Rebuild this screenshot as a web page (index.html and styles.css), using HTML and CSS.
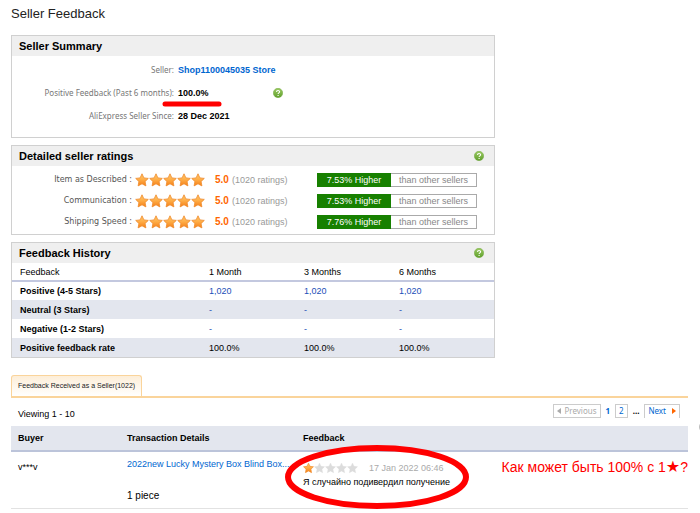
FILE: index.html
```html
<!DOCTYPE html>
<html lang="en">
<head>
<meta charset="utf-8">
<title>Seller Feedback</title>
<link rel="stylesheet" href="styles.css">
</head>
<body>
<svg class="defs" aria-hidden="true">
  <defs>
    <linearGradient id="gold" x1="0" y1="0" x2="0" y2="1"><stop offset="0" stop-color="#ffc766"/><stop offset=".45" stop-color="#ffb04a"/><stop offset="1" stop-color="#f57f17"/></linearGradient>
    <linearGradient id="green" x1="0" y1="0" x2="0" y2="1"><stop offset="0" stop-color="#9ccb62"/><stop offset="1" stop-color="#5f9f2c"/></linearGradient>
    <path id="star" d="M7 .8 8.9 4.9 13.3 5.4 10.1 8.5 10.9 12.9 7 10.8 3.1 12.9 3.9 8.5 .7 5.4 5.1 4.9Z"/>
    <symbol id="on" viewBox="0 0 14 14"><use href="#star" fill="url(#gold)" stroke="#ef8a2c" stroke-width=".8" stroke-linejoin="round"/></symbol>
    <symbol id="off" viewBox="0 0 14 14"><use href="#star" fill="#dcdcdc" stroke="#dcdcdc" stroke-width=".6" stroke-linejoin="round"/></symbol>
    <symbol id="help" viewBox="0 0 10 10"><circle cx="5" cy="5" r="4.7" fill="url(#green)" stroke="#6fa63d" stroke-width=".5"/><path d="M3.5 4C3.5 2.1 6.6 2.1 6.6 3.8 6.6 4.9 5.1 4.8 5.1 6M5.1 6.9V7.9" fill="none" stroke="#fff" stroke-width="1.1"/></symbol>
  </defs>
</svg>
<main class="page">
  <h1>Seller Feedback</h1>

  <section class="panel summary">
    <h2>Seller Summary</h2>
    <dl>
      <dt>Seller:</dt><dd><a href="#store">Shop1100045035 Store</a></dd>
      <dt>Positive Feedback (Past 6 months):</dt>
      <dd><span class="marked">100.0%<svg class="underline" viewBox="0 0 60 6" aria-hidden="true"><path d="M3 3H57" stroke="#f00" stroke-width="5" stroke-linecap="round"/></svg></span><svg class="help"><use href="#help"/></svg></dd>
      <dt>AliExpress Seller Since:</dt><dd>28 Dec 2021</dd>
    </dl>
  </section>

  <section class="panel ratings">
    <h2>Detailed seller ratings <svg class="help"><use href="#help"/></svg></h2>
    <ul>
      <li><span class="name">Item as Described :</span><span class="stars"><svg><use href="#on"/></svg><svg><use href="#on"/></svg><svg><use href="#on"/></svg><svg><use href="#on"/></svg><svg><use href="#on"/></svg></span><b>5.0</b><span class="count">(1020 ratings)</span><span class="compare"><strong>7.53% Higher</strong><span>than other sellers</span></span></li>
      <li><span class="name">Communication :</span><span class="stars"><svg><use href="#on"/></svg><svg><use href="#on"/></svg><svg><use href="#on"/></svg><svg><use href="#on"/></svg><svg><use href="#on"/></svg></span><b>5.0</b><span class="count">(1020 ratings)</span><span class="compare"><strong>7.53% Higher</strong><span>than other sellers</span></span></li>
      <li><span class="name">Shipping Speed :</span><span class="stars"><svg><use href="#on"/></svg><svg><use href="#on"/></svg><svg><use href="#on"/></svg><svg><use href="#on"/></svg><svg><use href="#on"/></svg></span><b>5.0</b><span class="count">(1020 ratings)</span><span class="compare"><strong>7.76% Higher</strong><span>than other sellers</span></span></li>
    </ul>
  </section>

  <section class="panel history">
    <h2>Feedback History <svg class="help"><use href="#help"/></svg></h2>
    <table>
      <thead><tr><th>Feedback</th><th>1 Month</th><th>3 Months</th><th>6 Months</th></tr></thead>
      <tbody>
        <tr><th>Positive (4-5 Stars)</th><td><a href="#p1">1,020</a></td><td><a href="#p3">1,020</a></td><td><a href="#p6">1,020</a></td></tr>
        <tr><th>Neutral (3 Stars)</th><td><a href="#n1">-</a></td><td><a href="#n3">-</a></td><td><a href="#n6">-</a></td></tr>
        <tr><th>Negative (1-2 Stars)</th><td><a href="#g1">-</a></td><td><a href="#g3">-</a></td><td><a href="#g6">-</a></td></tr>
        <tr><th>Positive feedback rate</th><td>100.0%</td><td>100.0%</td><td>100.0%</td></tr>
      </tbody>
    </table>
  </section>

  <section class="received">
    <nav class="tabs"><a href="#received">Feedback Received as a Seller(1022)</a></nav>
    <div class="toolbar">
      <span class="viewing">Viewing 1 - 10</span>
      <nav class="pager">
        <button class="prev" disabled><svg viewBox="0 0 4 6"><path d="M4 0V6L0 3Z"/></svg>Previous</button>
        <b>1</b>
        <a class="box" href="#2">2</a>
        <span>...</span>
        <a class="box next" href="#next">Next<svg viewBox="0 0 4 6"><path d="M0 0V6L4 3Z"/></svg></a>
      </nav>
    </div>
    <table class="reviews">
      <thead><tr><th>Buyer</th><th>Transaction Details</th><th>Feedback</th></tr></thead>
      <tbody><tr>
        <td class="buyer">v***v</td>
        <td><a class="item" href="#item">2022new Lucky Mystery Box Blind Box...</a><p class="qty">1 piece</p></td>
        <td>
          <div class="feedback">
            <div class="review">
              <div class="meta"><span class="stars small"><svg><use href="#on"/></svg><svg><use href="#off"/></svg><svg><use href="#off"/></svg><svg><use href="#off"/></svg><svg><use href="#off"/></svg></span><time>17 Jan 2022 06:46</time></div>
              <p lang="ru">Я случайно подивердил получение</p>
              <svg class="ring" viewBox="0 0 184 64" aria-hidden="true"><ellipse cx="92" cy="32" rx="89" ry="29" fill="none" stroke="#f00" stroke-width="6"/></svg>
            </div>
            <p class="note" lang="ru">Как может быть 100% с 1<span>★</span>?</p>
          </div>
        </td>
      </tr></tbody>
    </table>
  </section>
</main>
<div class="edge"></div>
</body>
</html>
```

FILE: styles.css
```css
* { box-sizing: border-box; }
body { margin: 0; position: relative; overflow-x: hidden; background: #fff; color: #000; font: 9px/12px "Liberation Sans", Arial, sans-serif; }
h1, h2, p, dl, dd, ul { margin: 0; padding: 0; }
a { color: #0066d0; text-decoration: none; }
svg { display: block; flex: none; }
.defs { position: absolute; width: 0; height: 0; }
.page { padding: 6px 12px 0 11px; }
h1 { font-size: 13px; line-height: 16px; font-weight: normal; margin-bottom: 13px; color: #222; }

.panel { max-width: 484px; border: 1px solid #d0d0d0; margin-bottom: 7px; }
.panel h2 { display: flex; justify-content: space-between; align-items: center; height: 20px; padding: 0 10px 0 7px; background: #efefef; font-size: 11px; }
.help { width: 10px; height: 10px; }

.summary dl { display: grid; grid-template-columns: 162px 1fr; column-gap: 4px; row-gap: 11px; padding: 8px 0 15px; }
.summary dt { text-align: right; color: #777; font-family: "Noto Sans", sans-serif; font-size: 8px; }
.summary dd { display: flex; align-items: center; font-weight: bold; }
.marked { position: relative; width: 95px; }
.underline { position: absolute; left: -16px; top: 14px; width: 60px; height: 6px; }

.ratings ul { display: grid; row-gap: 7px; padding: 7px 0 5px; list-style: none; }
.ratings li { display: flex; align-items: center; height: 14px; }
.ratings .name { width: 120px; margin-right: 3px; text-align: right; color: #555; font-family: "DejaVu Sans", sans-serif; font-size: 8px; }
.stars { display: flex; }
.stars svg { width: 14px; height: 14px; }
.ratings b { margin: 0 3px 0 10px; color: #f60; font-size: 10px; width: 14px; }
.count { color: #999; width: 85px; }
.compare { display: flex; width: 160px; height: 14px; text-align: center; }
.compare strong { width: 74px; background: #178000; color: #fff; line-height: 14px; font-weight: normal; }
.compare span { flex: 1; border: 1px solid #aaa; border-left: 0; color: #888; }

table { width: 100%; border-collapse: collapse; table-layout: fixed; }
th { text-align: left; }
th, td { padding: 0; }
.history th:first-child { width: 197px; padding-left: 8px; }
.history thead th { height: 18px; font-weight: normal; border-bottom: 2px solid #c3c8df; }
.history td, .history tbody th { height: 19px; }
.history tbody tr:nth-child(even) { background: #e3e6ee; }
.history a { color: #1b4fb8; }

.received { margin-top: 17px; }
.tabs { display: flex; border-bottom: 2px solid #fad49b; }
.tabs a { padding: 4px 6px; border: 1px solid #fad49b; border-bottom: 0; border-radius: 3px 3px 0 0; background: linear-gradient(#fdeed8, #fff); color: #222; font-size: 7px; }
.toolbar { display: flex; justify-content: space-between; align-items: center; height: 28px; padding: 4px 8px 0 7px; }
.pager { display: flex; align-items: center; gap: 5px; font-family: "Noto Sans", sans-serif; font-size: 8px; margin-bottom: 7px; }
.pager b { color: #0066d0; }
.pager span { font-weight: bold; }
.prev, .box { display: flex; align-items: center; gap: 3px; height: 14px; padding: 0 3px; border: 1px solid #ccc; background: #fff; font: inherit; }
.prev { color: #aaa; }
.pager .next { border-bottom: 0; gap: 6px; }
.pager svg { width: 4px; height: 6px; fill: #aaa; }
.pager .next svg { fill: #f60; }

.reviews thead { background: #e3e6ee; }
.reviews thead th { height: 25px; border-bottom: 2px solid #bcc4da; }
.reviews th:nth-child(1) { width: 116px; padding-left: 7px; }
.reviews th:nth-child(2) { width: 176px; }
.reviews tbody tr { border-bottom: 1px solid #e2e2e2; }
.reviews td { height: 57px; vertical-align: top; padding-top: 6px; }
.reviews .buyer { padding: 9px 0 0 7px; }
.item { white-space: nowrap; }
.qty { margin-top: 20px; font-size: 10px; }
.feedback { display: flex; justify-content: space-between; }
.review { position: relative; padding-top: 3px; white-space: nowrap; }
.meta { display: flex; align-items: center; gap: 11px; height: 13px; color: #aaa; }
.small svg { width: 11px; height: 12px; }
.review p { margin-top: 2px; }
.ring { position: absolute; left: -18px; top: -13px; width: 184px; height: 64px; }
.note { color: #f00; font-size: 14px; line-height: 18px; white-space: nowrap; }
.note span { font-family: "DejaVu Sans", sans-serif; font-size: 16px; }
.edge { position: absolute; top: 421px; right: -11px; width: 12px; height: 12px; border: 1px solid #bbb; border-radius: 50%; }
```
